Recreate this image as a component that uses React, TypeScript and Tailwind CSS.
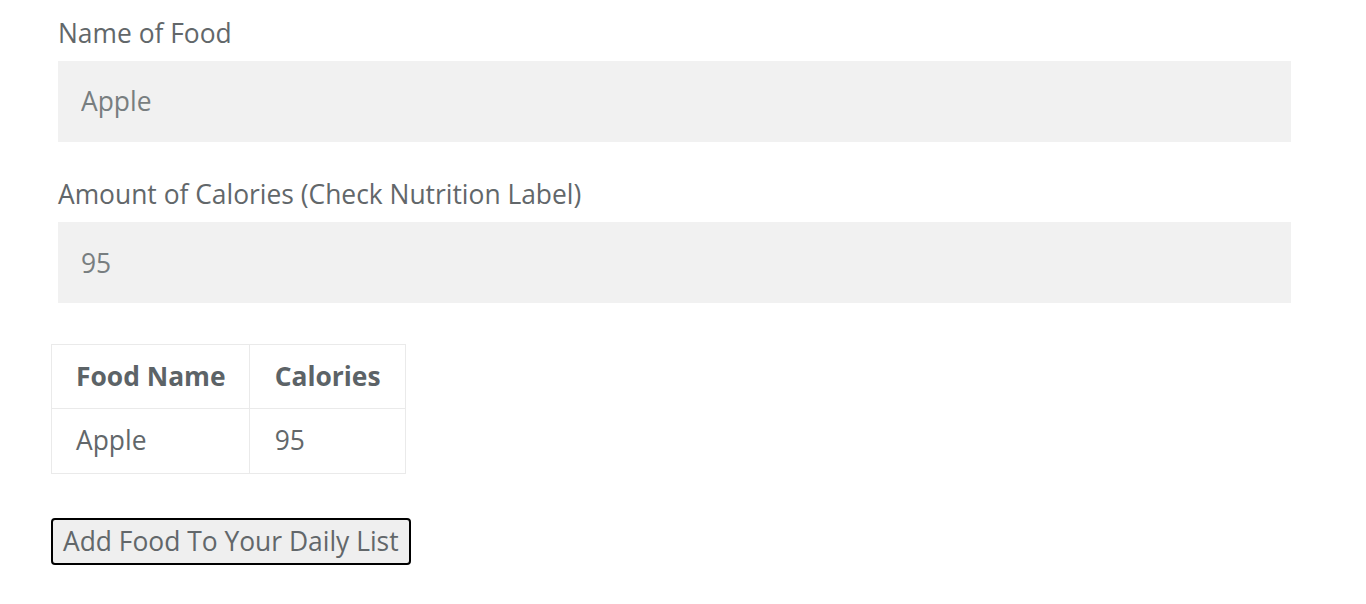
export default function App() {
  return (
    <div className="min-h-screen bg-white text-[#62676a] font-['Open_Sans',sans-serif]">
      <div className="pt-[14px]">
        <div className="ml-[58px] w-[1233px]">
          <label className="block text-[26.4px] leading-[38px]">Name of Food</label>
          <input
            readOnly
            value="Apple"
            className="mt-[9px] block w-full h-[81px] bg-[#f1f1f1] px-[23px] pb-[2px] text-[26.4px] text-[#787e80] outline-none"
          />
          <label className="block mt-[33px] text-[26.4px] leading-[38px]">
            Amount of Calories (Check Nutrition Label)
          </label>
          <input
            readOnly
            value="95"
            className="mt-[9px] block w-full h-[81px] bg-[#f1f1f1] px-[23px] text-[26.4px] text-[#787e80] outline-none"
          />
        </div>

        <table className="ml-[51px] mt-[41px] border-collapse border border-[#eaeaea] text-[26.4px]">
          <thead>
            <tr className="h-[64px]">
              <th className="border border-[#eaeaea] pl-[24px] pr-[23px] text-left font-bold text-[#5c6367]">Food Name</th>
              <th className="border border-[#eaeaea] pl-[25px] pr-[24px] text-left font-bold text-[#5c6367]">Calories</th>
            </tr>
          </thead>
          <tbody>
            <tr className="h-[65px]">
              <td className="border border-[#eaeaea] pl-[24px] pr-[23px]">Apple</td>
              <td className="border border-[#eaeaea] pl-[25px] pr-[24px]">95</td>
            </tr>
          </tbody>
        </table>

        <button className="ml-[51px] mt-[44px] block h-[47px] border-2 border-black rounded-[4px] bg-[#efefef] px-[10px] text-[26.4px] leading-none text-[#62676a]">
          Add Food To Your Daily List
        </button>
      </div>
    </div>
  );
}
